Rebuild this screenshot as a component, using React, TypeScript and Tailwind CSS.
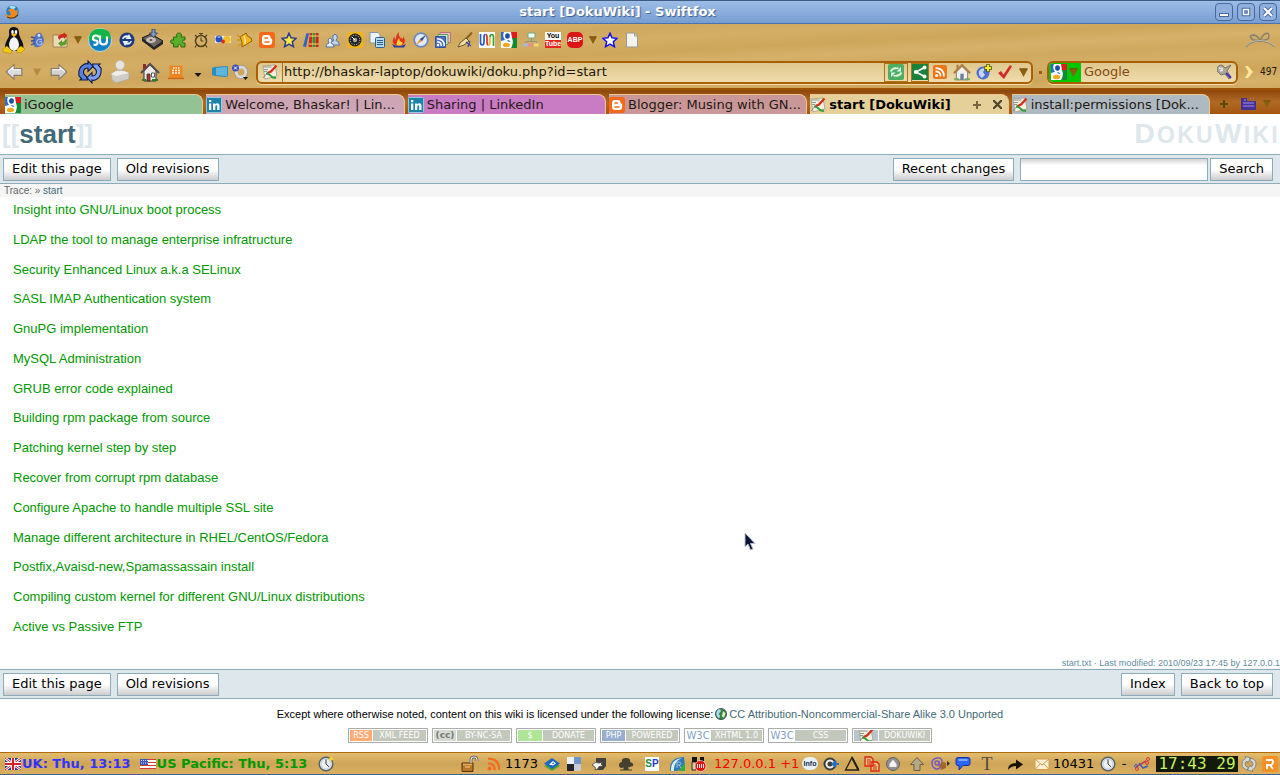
import type { ReactNode } from "react";

const topics = [
  "Insight into GNU/Linux boot process",
  "LDAP the tool to manage enterprise infratructure",
  "Security Enhanced Linux a.k.a SELinux",
  "SASL IMAP Authentication system",
  "GnuPG implementation",
  "MySQL Administration",
  "GRUB error code explained",
  "Building rpm package from source",
  "Patching kernel step by step",
  "Recover from corrupt rpm database",
  "Configure Apache to handle multiple SSL site",
  "Manage different architecture in RHEL/CentOS/Fedora",
  "Postfix,Avaisd-new,Spamassassain install",
  "Compiling custom kernel for different GNU/Linux distributions",
  "Active vs Passive FTP",
];

function Svg({
  className = "size-4",
  box = "0 0 16 16",
  children,
}: {
  className?: string;
  box?: string;
  children: ReactNode;
}) {
  return (
    <svg
      viewBox={box}
      className={`${className} shrink-0`}
      fill="none"
      aria-hidden="true"
    >
      {children}
    </svg>
  );
}

function Tool({
  label,
  width = "w-[22px]",
  children,
}: {
  label: string;
  width?: string;
  children: ReactNode;
}) {
  return (
    <button
      type="button"
      aria-label={label}
      className={`flex h-full shrink-0 items-center justify-center ${width}`}
    >
      {children}
    </button>
  );
}

/* ---------- shared glyphs ---------- */

function DownTriangle({ className = "size-2" }: { className?: string }) {
  return (
    <Svg className={className} box="0 0 8 8">
      <path d="M0 .5h8L4 8z" fill="#8a6010" />
      <path d="M.5.8h7" stroke="#5f3d05" strokeWidth=".6" />
    </Svg>
  );
}

function GoogleIcon() {
  return (
    <Svg>
      <path d="M0 0h16v16H0z" fill="#fff" />
      <path d="M10 0h6v6h-5z" fill="#e01b1b" />
      <path d="M11 6h5v10h-6q3-5 1-10z" fill="#118a35" />
      <path d="M0 0h3Q1 4 4 8l-4 1z" fill="#2a6ad0" />
      <ellipse cx="6.500" cy="4" rx="2.400" ry="2.700" fill="#1b50a8" />
      <path d="M6 8q3 0 3.500 2L7 9.500z" fill="#2a6ad0" />
      <ellipse cx="5.500" cy="13" rx="3.600" ry="2.200" fill="#f4a81c" />
    </Svg>
  );
}

function LinkedInIcon() {
  return (
    <Svg>
      <rect x=".5" y=".5" width="15" height="15" rx="1" fill="#1b84a8" stroke="#8fc9dc" />
      <path d="M3 6.500h2.300V13H3zM3 3h2.300v2.200H3zM7 6.500h2.200v1Q10 6.300 11.300 6.300q2.200 0 2.200 2.700v4h-2.300V9.500q0-1.300-.9-1.300T9.300 9.500V13H7z" fill="#fff" />
    </Svg>
  );
}

function BloggerIcon() {
  return (
    <Svg>
      <rect width="16" height="16" rx="2.500" fill="#f4691a" />
      <path d="M5.800 3h3q2.700 0 2.700 2.500 0 1 1 1.200.7.100.7 1v2q0 3.300-3.200 3.300H6Q3 13 3 10V6q0-3 2.800-3z" fill="#fff" />
      <path d="M6 6h2.500M6 10h4" stroke="#f4691a" strokeWidth="1.500" strokeLinecap="round" />
    </Svg>
  );
}

function DokuIcon() {
  return (
    <Svg>
      <path d="M1 2l12-1 2 11-12 3z" fill="#f3efe2" stroke="#9c9480" strokeWidth=".7" />
      <path d="M1.500 3h8M2 5.500h4M2 7.500h3" stroke="#8a9a8a" strokeWidth="1" />
      <path d="M14.500 1.500L9 7.500 5.500 9" stroke="#d3321d" strokeWidth="2.400" />
      <path d="M4 9.500q3 0 5 2.500t5 1.500" stroke="#2e9b34" strokeWidth="2" />
      <path d="M1 14l5-6" stroke="#7c7c70" strokeWidth=".8" />
    </Svg>
  );
}

function StarIcon({ fill, stroke }: { fill: string; stroke: string }) {
  return (
    <Svg>
      <path d="M8 1.200l2 4.600 5 .5-3.700 3.400 1.100 5L8 12.200l-4.400 2.500 1.100-5L1 6.300l5-.5z" fill={fill} stroke={stroke} strokeWidth="1.500" />
    </Svg>
  );
}

function RssArcs({ color, className }: { color: string; className?: string }) {
  return (
    <Svg className={className}>
      <circle cx="3.500" cy="12.500" r="2" fill={color} />
      <path d="M2 7.300q6.700 0 6.700 6.700M2 2.700q11.300 0 11.300 11.300" stroke={color} strokeWidth="2.300" />
    </Svg>
  );
}

function ClockIcon({ spark = false }: { spark?: boolean }) {
  return (
    <Svg>
      <circle cx="8" cy="8" r="6.800" fill="#eef2f4" stroke="#555f66" strokeWidth="1.400" />
      <circle cx="8" cy="8" r="5" stroke="#b6c0c8" strokeWidth=".8" />
      <path d="M8 8V3.500M8 8l3 2.800" stroke="#333" />
      {spark && <path d="M13 0l.8 2.200L16 3l-2.200.8L13 6l-.8-2.200L10 3l2.200-.8z" fill="#ffe11c" />}
    </Svg>
  );
}

function HouseIcon({ roof }: { roof: string }) {
  return (
    <Svg className="size-[18px]">
      <path d="M3 8l5-5 5 5v7H3z" fill="#f4f1e8" stroke="#777" strokeWidth=".8" />
      <path d="M.8 9L8 1.800 15.200 9" stroke={roof} strokeWidth="1.900" />
      <path d="M3 1.500h2v3l-2 2z" fill={roof} />
      <path d="M6.500 9.500h3V15h-3z" fill="#6d7f9d" />
      <path d="M1 14.500h4.500M10.500 14.500H15" stroke="#6fae5e" strokeWidth="1.800" />
    </Svg>
  );
}

/* ---------- title bar ---------- */

function TitleBar() {
  const control =
    "flex size-[18px] items-center justify-center rounded-[4px] border border-[#46689c] bg-[#8fb0de]";
  return (
    <header className="flex h-6 items-center border-t border-b border-t-[#3c5c84] border-b-[#4c73ab] bg-linear-to-b from-[#9dbde8] to-[#779dd0]">
      <span className="flex pl-1">
        <Svg>
          <circle cx="8.500" cy="7.500" r="6.300" fill="#2a80b8" />
          <path d="M5 3Q8 0 12 3L9 6z" fill="#a8dcf2" />
          <path d="M4 6q5-3 8 1l2-2-1 6q-3 4-8 3-4-1-4-4 3 2 6 1-1-4-3-5z" fill="#ef8a1f" />
          <path d="M3 13q6 3 11-2" stroke="#6d3c0c" strokeWidth="1.200" />
        </Svg>
      </span>
      <h1 className="flex-1 text-center text-[13px] leading-5 font-bold text-white [text-shadow:1px_1px_1px_#3f5f94]">
        start [DokuWiki] - Swiftfox
      </h1>
      <div className="flex gap-1 pr-[3px]">
        <button type="button" aria-label="Minimize" className={control}>
          <Svg className="size-3" box="0 0 12 12">
            <rect x="1.500" y="7.500" width="9" height="3" fill="#fff" stroke="#46689c" />
          </Svg>
        </button>
        <button type="button" aria-label="Maximize" className={control}>
          <Svg className="size-3" box="0 0 12 12">
            <rect x="3.500" y="3.500" width="5" height="5" stroke="#46689c" strokeWidth="3.500" />
            <rect x="3.500" y="3.500" width="5" height="5" stroke="#fff" strokeWidth="1.500" />
          </Svg>
        </button>
        <button type="button" aria-label="Close" className={control}>
          <Svg className="size-3" box="0 0 12 12">
            <path d="M2 2l8 8M10 2l-8 8" stroke="#46689c" strokeWidth="4" />
            <path d="M2 2l8 8M10 2l-8 8" stroke="#fff" strokeWidth="2.200" />
          </Svg>
        </button>
      </div>
    </header>
  );
}

/* ---------- bookmark toolbar ---------- */

function AddonBar() {
  return (
    <div className="flex h-8 items-center">
      <Tool label="Linux" width="w-[27px]">
        <Svg className="h-7 w-6" box="0 0 24 28">
          <path d="M12 1q5 0 5 6 0 3 3 8 3 7 0 10H5q-4-4 0-11 3-4 2-8 0-5 5-5z" fill="#111" />
          <path d="M12 11q4 1 5 7 0 6-5 7-5-1-5-7 1-6 5-7z" fill="#f4f4f4" />
          <ellipse cx="10.500" cy="6" rx="1.300" ry="2" fill="#fff" />
          <ellipse cx="14" cy="6" rx="1.300" ry="2" fill="#fff" />
          <path d="M9 8.500q3-2 6 0l-3 2.500z" fill="#f5c21c" />
          <path d="M1 23l4-3 5 5-1 2.500-8-1.500zM23 23l-4-3-4 3v4q5 1 8-4z" fill="#f3c913" stroke="#a57a00" strokeWidth=".5" />
        </Svg>
      </Tool>
      <Tool label="Pidgin">
        <Svg>
          <path d="M5 4q2-4 6-3l2 4q2 3 0 7-3 4-8 3-3-3-2-7z" fill="#5674bd" />
          <path d="M5 6l-4-1M5 8.500l-4 .5M5 11l-4 2" stroke="#3a5294" strokeWidth="1.300" />
          <path d="M12 8q-4-2-5 1t2 4q3 0 3-2t-3-1" stroke="#a9c0f0" strokeWidth="1.200" />
          <circle cx="9" cy="3.500" r="1.400" fill="#dbe6ff" />
        </Svg>
      </Tool>
      <Tool label="Sync folders">
        <Svg>
          <path d="M1 3h6l1 2h7v10H1z" fill="#eadbb8" stroke="#a08253" />
          <path d="M6 6q0-4 5-4l1-1.500 3.500 3L12 7V5.500Q8 5 8 8z" fill="#cf2a1f" />
          <path d="M15 8q0 6-5 5.500V15l-4-3.500L10 8v2q3 0 3-3z" fill="#5b9c2d" />
        </Svg>
      </Tool>
      <Tool label="Sync options" width="w-[13px]">
        <DownTriangle />
      </Tool>
      <Tool label="StumbleUpon" width="w-8">
        <Svg className="size-6" box="0 0 24 24">
          <circle cx="12" cy="12" r="11.500" fill="#1180c4" stroke="#dcebe0" strokeWidth=".8" />
          <path d="M.8 13Q1 1 12 .8T23.200 11Q12 10 .8 13z" fill="#12b54a" />
          <path d="M11 9.500Q10.500 7.500 8 7.500q-3 0-3 2.500t2.500 2.500 2 2.500-4 1.500M12 7.500V13q0 3.500 3.500 3.500T19 13V8.500" stroke="#fff" strokeWidth="2.200" />
        </Svg>
      </Tool>
      <Tool label="Refresh feeds">
        <Svg>
          <circle cx="8" cy="8" r="7.600" fill="#1d3c80" />
          <path d="M3 7q1.500-4.500 6-3.500l1-1.500 2.500 5H6.500L8 5.500Q5 5 4.500 7zM13 9q-1.500 4.500-6 3.500L6 14 3.500 9h6L8 10.500q3 .5 3.500-1.500z" fill="#e8f0ff" />
        </Svg>
      </Tool>
      <Tool label="Downloads" width="w-7">
        <Svg className="size-[22px]" box="0 0 22 22">
          <path d="M1 9l9-4 12 7-9 7z" fill="#6b6662" stroke="#151515" />
          <path d="M1 9l12 9 9-6v3l-9 6L1 12z" fill="#292725" />
          <ellipse cx="10" cy="11" rx="5" ry="3" fill="#c9bfb4" />
          <ellipse cx="10" cy="11" rx="1.500" ry=".9" fill="#555" />
          <path d="M11 0h3v4h2.500L12.500 8.500 8.500 4H11z" fill="#8197bf" stroke="#273a66" strokeWidth=".8" />
        </Svg>
      </Tool>
      <Tool label="Add-ons" width="w-6">
        <Svg>
          <path d="M7 5Q5.500 1 9 1t2 4h4v3q-2.500-.5-2.500 1.500T15 11v4h-4q.5-2.500-1.500-2.500T8 15H3.500v-3.500Q.5 12 .5 9.500T3.500 8V5z" fill="#58ae2b" stroke="#2e6b12" />
        </Svg>
      </Tool>
      <Tool label="Timer">
        <Svg>
          <circle cx="8" cy="9" r="5.500" stroke="#55451f" strokeWidth="1.600" />
          <path d="M8 9V5.500M8 9h2.500M6 1.500h4M8 1v3M2 3l2 2M14 3l-2 2M3.500 13L2 15.500M12.500 13l1.500 2.500" stroke="#55451f" strokeWidth="1.200" />
        </Svg>
      </Tool>
      <Tool label="Bookmark sync">
        <Svg>
          <path d="M0 4h16v7H0z" fill="#eceae6" />
          <circle cx="4" cy="7" r="3.500" fill="#2450c0" />
          <circle cx="12" cy="7.500" r="3.800" fill="#f2bf2b" />
          <circle cx="8" cy="9.500" r="2" fill="#d92c22" />
          <path d="M2.500 5h3" stroke="#a9c3ff" strokeWidth="1.300" />
        </Svg>
      </Tool>
      <Tool label="Alerts">
        <Svg>
          <path d="M3 5l6-4q1 4 5 5l1 3-10 6q1-5-2-10z" fill="#f5b51a" stroke="#955f05" />
          <path d="M0 3l3 2M0 8h3M1 14l3-2" stroke="#d98d0a" strokeWidth="1.400" />
          <path d="M7 4q2 4 1 8" stroke="#fff0a8" strokeWidth="1.400" />
        </Svg>
      </Tool>
      <Tool label="Blogger"><BloggerIcon /></Tool>
      <Tool label="Favourites"><StarIcon fill="#fbe83c" stroke="#2b3c93" /></Tool>
      <Tool label="Library">
        <Svg>
          <path d="M0 14.500L3.500 1l2.500.5L3 15z" fill="#2c66c4" />
          <path d="M6.500 1H9v14H5.500z" fill="#d32a20" />
          <path d="M9.500 1H12v14H9.500z" fill="#2a9b31" />
          <path d="M12.500 1h3v14h-3z" fill="#c7251b" />
          <path d="M6 4h9.500M6 12h9.500" stroke="#f7df6b" />
        </Svg>
      </Tool>
      <Tool label="Contacts">
        <Svg>
          <path d="M5 13q0-4 4-4.500-2-2-1-5 2-2.500 4 0 1 3-1 5 3 .5 3.500 4.500z" fill="#c5d4ec" stroke="#5874a6" />
          <path d="M1 15q0-3.500 3-4Q2.500 9 3.500 7q1.500-2 3 0t-.5 4q3 .5 3 4z" fill="#e6eefa" stroke="#5874a6" />
        </Svg>
      </Tool>
      <Tool label="Speed">
        <Svg>
          <rect width="16" height="16" rx="2" fill="#efb31d" />
          <circle cx="8" cy="8" r="6.500" fill="#222" />
          <circle cx="8" cy="8" r="4.800" stroke="#e9e9d9" strokeDasharray="1 1.500" />
          <circle cx="8" cy="8" r="2.200" fill="#a8a89a" />
          <path d="M5 5l3 3" stroke="#fff" />
        </Svg>
      </Tool>
      <Tool label="Copy page">
        <Svg>
          <path d="M1 .5h8l2 2V11H1z" fill="#edf4fa" stroke="#8097ab" />
          <rect x="6.500" y="5.500" width="9" height="10" rx="1" fill="#b7d9ef" stroke="#24618f" />
          <path d="M8 8.500h6M8 10.500h6M8 12.500h6" stroke="#24618f" />
        </Svg>
      </Tool>
      <Tool label="Burn">
        <Svg>
          <path d="M8 0q-1 4 2 6t2-2q4 6 0 9-4 2-8 0-4-3-1-8l2 3Q4 4 8 0z" fill="#e2341d" />
          <path d="M8 6q0 3 2.500 4t-.5 3.500H6Q4.500 11 8 6z" fill="#ffd23c" />
          <path d="M1 12q7 4 14 0l-2 3.500H3z" fill="#2d3f9e" />
        </Svg>
      </Tool>
      <Tool label="Compass">
        <Svg>
          <circle cx="8" cy="8" r="6.800" fill="#dfebfa" stroke="#7089bd" strokeWidth="1.800" />
          <path d="M13 3L9 9 3 13l4-6z" fill="#e9963b" />
          <path d="M13 3L9 9 7 7z" fill="#2a4b9c" />
        </Svg>
      </Tool>
      <Tool label="Feed reader">
        <Svg>
          <path d="M5 .5h10.500v10H5z" fill="#f3c4c4" stroke="#c0707a" />
          <path d="M3 2.500h10v10H3z" fill="#cce6c9" stroke="#5b985c" />
          <path d="M.5 4.500h10v11H.5z" fill="#4a71c3" stroke="#31549d" />
          <circle cx="3" cy="13" r="1.200" fill="#fff" />
          <path d="M2 9.700q4.300 0 4.300 4.300M2 6.700q7.300 0 7.300 7.300" stroke="#fff" strokeWidth="1.400" />
        </Svg>
      </Tool>
      <Tool label="Clean">
        <Svg>
          <path d="M15 .5L8 8" stroke="#8c5d1e" strokeWidth="2" />
          <path d="M9 6l3 3-5 4-6 2 2-4z" fill="#efdfa7" stroke="#6c5527" />
          <path d="M9 10l5 4M13 9l-2 6" stroke="#3a4b9b" strokeWidth="1.300" />
        </Svg>
      </Tool>
      <Tool label="Waves">
        <Svg>
          <path d="M0 0h16v16H0z" fill="#fff" />
          <path d="M1.500 2v8q0 3 1.700 3T5 10V5q0-2.500 1.500-2.500" stroke="#2456d4" strokeWidth="1.700" />
          <path d="M6.500 2.500Q8 2.500 8 5v5q0 3 1.500 3" stroke="#d93124" strokeWidth="1.700" />
          <path d="M9.500 13q1.500 0 1.500-3V5" stroke="#f1b81c" strokeWidth="1.700" />
          <path d="M11 5q0-2.500 1.700-2.500T14.500 5v9" stroke="#33a336" strokeWidth="1.700" />
        </Svg>
      </Tool>
      <Tool label="Google"><GoogleIcon /></Tool>
      <Tool label="Sitemap">
        <Svg>
          <path d="M5 1h7v5H5z" fill="#f3fff5" stroke="#6fa784" />
          <path d="M8.500 6v4M3 11V9.500h10.500V11" stroke="#879487" />
          <path d="M.5 11.500h4v3h-4z" fill="#a2b9ed" />
          <path d="M5.500 11.500h4.500v3H5.500z" fill="#eb8d8d" />
          <path d="M11 11.500h4.500v3H11z" fill="#f2dc69" />
        </Svg>
      </Tool>
      <Tool label="YouTube">
        <span className="flex size-4 flex-col bg-white text-center font-[Liberation_Sans_Narrow,Liberation_Sans,sans-serif] text-[7px] leading-[8px] font-bold">
          <span className="text-black">You</span>
          <span className="bg-[#e02a20] text-white">Tube</span>
        </span>
      </Tool>
      <Tool label="Adblock Plus">
        <span className="flex size-4 items-center justify-center rounded-[5px] bg-[#dc1616] font-[Liberation_Sans,sans-serif] text-[7px] leading-4 font-bold text-white">
          ABP
        </span>
      </Tool>
      <Tool label="Adblock options" width="w-[13px]"><DownTriangle /></Tool>
      <Tool label="Bookmark star"><StarIcon fill="#fff" stroke="#1414f0" /></Tool>
      <Tool label="New page">
        <Svg>
          <path d="M2.500 1h8l3 3v11h-11z" fill="#f3f3ef" stroke="#9b9a94" />
          <path d="M10.500 1v3h3" stroke="#9b9a94" />
        </Svg>
      </Tool>
      <span className="ml-auto pr-1">
        <Svg className="h-4 w-[31px]" box="0 0 31 16">
          <path d="M1 15q4-6 14-6 9 0 15 6M15 8.500Q8 9 6 6t3-3q4 1 6 5.500 3-6 6-7t3 3-9 4" stroke="#85806f" strokeWidth="1.500" />
          <path d="M1 14.500q4-6 14-6 9 0 15 6" stroke="#d8d3c6" strokeWidth=".7" />
        </Svg>
      </span>
    </div>
  );
}

/* ---------- navigation toolbar ---------- */

function NavBar() {
  const field =
    "flex h-[23px] items-center overflow-hidden rounded-[6px] border-2 border-[#a85f08] bg-linear-to-b from-[#e0c88c] to-[#efdcae] shadow-[0_1px_0_#f4dca4]";
  return (
    <div className="flex h-[34px] items-center border-b-2 border-[#9d5209]">
      <Tool label="Back" width="w-7">
        <Svg className="size-[18px]">
          <path d="M1 8l7-6.500V5h7v6H8v3.500z" fill="#dcdcdc" stroke="#85796a" />
          <path d="M3 7.500L7 4v2h7" stroke="#fff" />
        </Svg>
      </Tool>
      <Tool label="History" width="w-[18px]">
        <Svg className="size-2" box="0 0 8 8">
          <path d="M0 .5h8L4 8z" fill="#b58a3c" />
        </Svg>
      </Tool>
      <Tool label="Forward" width="w-[26px]">
        <Svg className="size-[18px]">
          <path d="M15 8L8 1.500V5H1v6h7v3.500z" fill="#d2d2d2" stroke="#85796a" />
          <path d="M13 7.500L9 4v2H2" stroke="#fff" />
        </Svg>
      </Tool>
      <Tool label="Reload" width="w-9">
        <Svg className="size-6" box="0 0 24 24">
          <path d="M1 16Q0 8 5 5q3-2 5-1V1l5 5.500-5 5V8Q6 8 5.500 12q0 3 3 4.500l1 3.500H2l1.500-1.500z" fill="#5b80dc" stroke="#0d1d49" strokeWidth="1.100" />
          <path d="M23 8q1 8-4 11-3 2-5 1v3l-5-5.500 5-5V16q4 0 4.500-4 0-3-3-4.500l-1-3.500H22l-1.500 1.500z" fill="#7f9ff0" stroke="#0d1d49" strokeWidth="1.100" />
        </Svg>
      </Tool>
      <Tool label="Stop" width="w-6">
        <Svg className="h-6 w-5" box="0 0 20 24">
          <path d="M7 8h5l1 5H7z" fill="#c9c6c1" />
          <circle cx="10" cy="5" r="4.500" fill="#e7e5e2" stroke="#bdb9b3" strokeWidth=".6" />
          <path d="M1 14l5-3h8l5 2v6L6 23l-4-3z" fill="#cfccc7" stroke="#aaa6a0" strokeWidth=".7" />
          <path d="M1 14l5 2 13-3-5-2H6z" fill="#efeeeb" />
        </Svg>
      </Tool>
      <Tool label="Home" width="w-9">
        <Svg className="size-5" box="0 0 20 20">
          <path d="M4 9l6-6 6 6v10H4z" fill="#ece9e6" stroke="#333" />
          <path d="M1 11l9-9 9 9" stroke="#565050" strokeWidth="2.200" />
          <path d="M3 2h3v5H3z" fill="#8b2f26" />
          <path d="M7 12h3v7H7z" fill="#b52c21" stroke="#333" strokeWidth=".8" />
          <path d="M11.500 11h3v4h-3z" fill="#fff" stroke="#333" strokeWidth=".8" />
          <path d="M2 18h4M12 18h6" stroke="#2f7d24" strokeWidth="2" />
        </Svg>
      </Tool>
      <Tool label="Sun tab" width="w-4">
        <Svg>
          <path d="M1.500 1.500h13V11l1 3.500H.5l1-3.500z" fill="#ef8624" />
          <path d="M5 4h1.500M7.500 4H9M10 4h1.500M4 6.500h2M7 6.500h2M10 6.500h2M4 9h2M7 9h2M10 9h2" stroke="#fff3df" strokeWidth="1.700" />
          <path d="M0 14.500h16" stroke="#c76412" strokeWidth="1.200" />
        </Svg>
      </Tool>
      <Tool label="More" width="w-7">
        <Svg className="mt-1.5 h-2 w-2" box="0 0 8 8">
          <path d="M.5 2h7L4 6z" fill="#161616" />
        </Svg>
      </Tool>
      <Tool label="Tags" width="w-4">
        <Svg>
          <path d="M0 4l2-1 13-1 1 1v9l-2 1-11-1-3-1z" fill="#2f8cbd" />
          <path d="M4 4l11-1v9L4 11z" fill="#5fb6dd" />
        </Svg>
      </Tool>
      <Tool label="Proxy" width="w-6">
        <Svg>
          <circle cx="9" cy="8" r="5" stroke="#d9d9dd" strokeWidth="3" />
          <circle cx="9" cy="8" r="6.700" stroke="#8e8e94" strokeWidth=".6" />
          <circle cx="3.500" cy="4" r="3.500" fill="#3a4ebd" />
          <path d="M2 2.500l3 3M5 2.500l-3 3" stroke="#fff" />
          <path d="M11 13h5l-2.500 3z" fill="#111" />
        </Svg>
      </Tool>

      <div className={`${field} ml-1 min-w-0 flex-1`}>
        <span className="flex h-full items-center border-r border-[#a0742c] pr-1 pl-1">
          <DokuIcon />
        </span>
        <input
          aria-label="Location"
          defaultValue="http://bhaskar-laptop/dokuwiki/doku.php?id=start"
          className="min-w-0 flex-1 bg-transparent pl-px text-[13px] leading-5 text-[#1d1708] outline-none"
        />
        <span className="flex h-full items-center gap-[3px]">
          <button type="button" aria-label="Convert link" className="flex h-full w-6 items-center border border-[#ad7318] pl-[3px]">
            <Svg>
              <rect width="16" height="16" rx="2" fill="#4fae62" />
              <path d="M2.500 7.500Q5 3 10.500 4.500M13.500 8.500Q11 13 5.500 11.500" stroke="#e5f8e6" strokeWidth="1.700" />
              <path d="M13 3v4.500H8.500zM3 13V8.500h4.500z" fill="#e5f8e6" />
            </Svg>
          </button>
          <button type="button" aria-label="Share" className="flex h-full w-[18px] items-center justify-center border border-[#ad7318]">
            <Svg>
              <path d="M0 0h16v16H0z" fill="#19813a" />
              <path d="M12.500 3.500L4 8l8.500 4.500" stroke="#fff" strokeWidth="1.700" />
              <circle cx="12.500" cy="3.500" r="2" fill="#fff" />
              <circle cx="3.800" cy="8" r="2" fill="#fff" />
              <circle cx="12.500" cy="12.500" r="2" fill="#fff" />
            </Svg>
          </button>
        </span>
        <Tool label="Subscribe">
          <span className="flex size-[14px] items-center justify-center rounded-[2px] bg-[#ee7518]">
            <RssArcs color="#fff" className="size-3" />
          </span>
        </Tool>
        <Tool label="Site home"><HouseIcon roof="#ad7f4c" /></Tool>
        <Tool label="Add network">
          <Svg>
            <circle cx="7" cy="9" r="6.500" fill="#4d6fd0" />
            <path d="M3 7q3-4 6-2L7 8l2 3-3 3Q2 12 3 7z" fill="#c3d5f8" />
            <path d="M12 0v8M8 4h8" stroke="#4c5207" strokeWidth="3.500" />
            <path d="M12 .8v6.400M8.800 4h6.400" stroke="#f4ee2c" strokeWidth="2" />
          </Svg>
        </Tool>
        <Tool label="Check site" width="w-5">
          <Svg>
            <path d="M1 9l3-2 2.500 3.500L13 1l2 1.500L7 15z" fill="#d22b2b" />
          </Svg>
        </Tool>
        <Tool label="Location history" width="w-4"><DownTriangle className="size-[9px]" /></Tool>
      </div>

      <span className="flex w-3.5 justify-center">
        <span className="size-[3px] bg-[#9c5f10]" />
      </span>

      <div className={`${field} w-[191px]`}>
        <button type="button" aria-label="Search engine" className="flex h-full w-8 items-center gap-0.5 bg-[#00c800] pl-0.5">
          <GoogleIcon />
          <DownTriangle className="size-[9px]" />
        </button>
        <input
          aria-label="Search the web"
          placeholder="Google"
          className="min-w-0 flex-1 bg-transparent pl-[3px] text-[13px] leading-5 outline-none placeholder:text-[#8a4a12]"
        />
        <Tool label="Search">
          <Svg>
            <path d="M0 4q1-3 5-3l3 3 6-3-4 6 4 6-2 2-4-5-4 1-4-4z" fill="#aaa69c" stroke="#6a665e" strokeWidth=".8" />
            <path d="M2 4l4 1M3 7l3-1" stroke="#eeeae0" strokeWidth="1.500" />
            <path d="M9 9l5 5" stroke="#4d2fb4" strokeWidth="2" />
          </Svg>
        </Tool>
      </div>
      <Tool label="Overflow" width="w-[22px]">
        <Svg className="h-3 w-2" box="0 0 8 12">
          <path d="M0 0h3l5 6-5 6H0l3.500-6z" fill="#ffe49b" />
        </Svg>
      </Tool>
      <span className="w-5 font-[DejaVu_Sans_Condensed,DejaVu_Sans,sans-serif] text-[10px] leading-3 text-[#1d1708]">
        497
      </span>
    </div>
  );
}

/* ---------- tabs ---------- */

const tabs = [
  { title: "iGoogle", tint: "bg-[#93c294]", icon: <GoogleIcon /> },
  { title: "Welcome, Bhaskar! | Lin...", tint: "bg-[#cda5b4]", icon: <LinkedInIcon /> },
  { title: "Sharing | LinkedIn", tint: "bg-[#c97bc4]", icon: <LinkedInIcon /> },
  { title: "Blogger: Musing with GN...", tint: "bg-[#c99798]", icon: <BloggerIcon /> },
  { title: "start [DokuWiki]", tint: "bg-[#e6d09a]", icon: <DokuIcon />, active: true },
  { title: "install:permissions [Dok...", tint: "bg-[#afb9c1]", icon: <DokuIcon /> },
];

function TabStrip() {
  return (
    <nav
      aria-label="Tabs"
      className="flex h-6 items-end bg-linear-to-b from-[#8f4609] via-[#b06a24] to-[#a4560f] pl-[5px]"
    >
      <div className="flex min-w-0 flex-1">
        {tabs.map((tab) => (
          <div
            key={tab.title}
            className={`mr-[3px] flex h-5 min-w-0 flex-1 items-center rounded-tr-[8px] border-t border-r border-[#e9c98f] ${tab.tint}`}
          >
            <button type="button" className="flex min-w-0 flex-1 items-center gap-[3px] text-left whitespace-nowrap">
              {tab.icon}
              <span
                className={`text-[13px] leading-5 ${
                  tab.active ? "font-bold text-black" : "text-[#1f1a14]"
                }`}
              >
                {tab.title}
              </span>
            </button>
            {tab.active && (
              <span className="flex items-center gap-3 pr-1.5">
                <button type="button" aria-label="Duplicate tab">
                  <Svg className="size-2" box="0 0 8 8">
                    <path d="M4 0v8M0 4h8" stroke="#77653f" strokeWidth="2" />
                  </Svg>
                </button>
                <button type="button" aria-label="Close tab">
                  <Svg className="size-[9px]" box="0 0 8 8">
                    <path d="M0 0l8 8M8 0L0 8" stroke="#4f432c" strokeWidth="2" />
                  </Svg>
                </button>
              </span>
            )}
          </div>
        ))}
      </div>
      <div className="flex h-5 w-[67px] items-center">
        <Tool label="New tab" width="w-[22px]">
          <Svg className="size-2" box="0 0 8 8">
            <path d="M4 0v8M0 4h8" stroke="#5a4a05" strokeWidth="2" />
          </Svg>
        </Tool>
        <Tool label="Tab groups" width="w-7">
          <Svg>
            <path d="M0 2h6v3h9v9H0z" fill="#473094" />
            <path d="M2 7h11M2 10h11M3 4h2M9 2h1M12 2h1" stroke="#a490ea" strokeWidth="1.200" />
          </Svg>
        </Tool>
        <DownTriangle />
      </div>
    </nav>
  );
}

/* ---------- wiki page ---------- */

function WikiButton({ children }: { children: ReactNode }) {
  return (
    <button
      type="button"
      className="h-[23px] border border-[#8cacbb] bg-linear-to-b from-white from-50% to-[#cccccc] px-2 text-[13px] leading-5 text-black"
    >
      {children}
    </button>
  );
}

function ButtonBar({ children }: { children: ReactNode }) {
  return (
    <div className="flex h-[30px] items-center justify-between border-y border-[#8cacbb] bg-[#dee7ec] pr-[7px] pl-[3px]">
      <div className="flex gap-1.5">
        <WikiButton>Edit this page</WikiButton>
        <WikiButton>Old revisions</WikiButton>
      </div>
      <div className="flex gap-1.5">{children}</div>
    </div>
  );
}

const badges = [
  { left: "RSS", right: "XML FEED", tint: "w-[22px] bg-[#ffab76] text-white" },
  { left: "(cc)", right: "BY-NC-SA", tint: "w-[22px] bg-[#d6dbd2] text-[9px] font-bold text-[#777777]" },
  { left: "$", right: "DONATE", tint: "w-6 bg-[#aee596] text-white" },
  { left: "PHP", right: "POWERED", tint: "w-[23px] bg-[#98afcf] text-white" },
  { left: "W3C", right: "XHTML 1.0", tint: "w-6 bg-white text-[10px] text-[#7f9fc4]" },
  { left: "W3C", right: "CSS", tint: "w-6 bg-white text-[10px] text-[#7f9fc4]" },
  { left: "", right: "DOKUWIKI", tint: "w-6 bg-[#b9c7cc]" },
];

function WikiPage() {
  return (
    <main className="flex flex-1 flex-col bg-white font-[Liberation_Sans,sans-serif]">
      <div className="flex h-10 items-center justify-between overflow-hidden pl-0.5 font-bold">
        <h2 className="text-[26px] leading-10 text-[#dee7ec]">
          [[<a href="#start" className="text-[#436976]">start</a>]]
        </h2>
        <a href="#wiki" className="text-[23px] leading-10 tracking-widest text-[#dee7ec] uppercase">
          <span className="text-[28px]">D</span>oku<span className="text-[28px]">W</span>iki
        </a>
      </div>
      <div className="font-[DejaVu_Sans,sans-serif]">
        <ButtonBar>
          <WikiButton>Recent changes</WikiButton>
          <form className="flex gap-0.5" onSubmit={(e) => e.preventDefault()}>
            <input
              aria-label="Search the wiki"
              className="h-[23px] w-[188px] border border-[#8cacbb] bg-linear-to-b from-[#d4d4d4] to-white to-30% px-1 text-[13px] outline-none"
            />
            <WikiButton>Search</WikiButton>
          </form>
        </ButtonBar>
      </div>
      <p className="bg-[#f5f5f5] pl-1 text-[10px] leading-[13px] text-[#666666]">
        Trace: » <a href="#start" className="text-[#436976]">start</a>
      </p>

      <ul className="flex flex-1 flex-col justify-between px-[13px] pt-[3px] pb-5 text-[13px] leading-5 text-[#009900]">
        {topics.map((topic) => (
          <li key={topic}>
            <a href="#topic">{topic}</a>
          </li>
        ))}
      </ul>
      <p className="text-right text-[9px] leading-3 text-[#638c9c]">
        start.txt · Last modified: 2010/09/23 17:45 by 127.0.0.1
      </p>
      <div className="font-[DejaVu_Sans,sans-serif]">
        <ButtonBar>
          <WikiButton>Index</WikiButton>
          <WikiButton>Back to top</WikiButton>
        </ButtonBar>
      </div>

      <footer className="flex flex-col items-center pt-[7px] pb-[9px]">
        <p className="flex items-center text-[11px] leading-4 text-black">
          Except where otherwise noted, content on this wiki is licensed under the following license:
          <span className="mr-0.5 ml-0.5">
            <Svg className="size-3">
              <circle cx="8" cy="8" r="7.500" fill="#3f7f3a" stroke="#2c4a5c" />
              <path d="M4 2q4-1 4 2L5 8l2 3-2 3Q-1 9 4 2z" fill="#a9dbf3" />
              <path d="M11 4l3 3-2 6-3-2z" fill="#d6efd0" />
            </Svg>
          </span>
          <a href="#license" className="text-[#436976]">
            CC Attribution-Noncommercial-Share Alike 3.0 Unported
          </a>
        </p>
        <div className="mt-1.5 flex gap-1">
          {badges.map((badge) => (
            <a
              key={badge.left + badge.right}
              href="#badge"
              className="flex h-[15px] w-20 gap-px border border-[#acacac] bg-white p-px font-[DejaVu_Sans,sans-serif] text-[8px] leading-[11px]"
            >
              <span className={`flex items-center justify-center overflow-hidden ${badge.tint}`}>
                {badge.left || <DokuIcon />}
              </span>
              <span className="flex-1 bg-[#c3c8bc] text-center text-white">{badge.right}</span>
            </a>
          ))}
        </div>
      </footer>
    </main>
  );
}

/* ---------- status bar ---------- */

function StatusBar() {
  return (
    <div className="flex h-[23px] items-center border-t border-b border-t-[#b06c0c] border-b-[#41618c] bg-linear-to-b from-[#e3bd6e] via-[#cfa558] to-[#d9b062] text-[13px] leading-5">
      <span className="flex items-center gap-px pl-[5px] font-bold text-[#3333ff]">
        <Svg className="h-3 w-4" box="0 0 16 12">
          <path d="M0 0h16v12H0z" fill="#27408f" />
          <path d="M0 0l16 12M16 0L0 12" stroke="#fff" strokeWidth="2.600" />
          <path d="M0 0l16 12M16 0L0 12" stroke="#d0202c" />
          <path d="M8 0v12M0 6h16" stroke="#fff" strokeWidth="4" />
          <path d="M8 0v12M0 6h16" stroke="#d0202c" strokeWidth="2.200" />
        </Svg>
        UK: Thu, 13:13
      </span>
      <span className="flex items-center gap-px pl-[9px] font-bold text-[#009900]">
        <Svg className="h-3 w-4" box="0 0 16 12">
          <path d="M0 1h16v10H0z" fill="#fff" />
          <path d="M0 1.500h16M0 4.500h16M0 7.500h16M0 10.500h16" stroke="#d33b3b" />
          <path d="M0 1h8v6H0z" fill="#3a56b8" />
          <path d="M1 2.500h7M1 5h7" stroke="#fff" strokeWidth=".8" strokeDasharray="1 1" />
        </Svg>
        US Pacific: Thu, 5:13
      </span>
      <Tool label="World clock" width="w-[38px]"><ClockIcon spark /></Tool>

      <div className="ml-auto flex h-full items-center">
        <Tool label="Security" width="w-[26px]">
          <Svg className="size-[18px]" box="0 0 18 18">
            <path d="M1 8h11v8.500H1z" fill="#b8752c" stroke="#5b3208" />
            <path d="M2 9.500h9M4 12h5" stroke="#e7b065" strokeWidth="1.500" />
            <path d="M10 8V5q0-3 3-3t3 3v1" stroke="#555" strokeWidth="2.600" />
            <path d="M10 8V5q0-3 3-3t3 3v1" stroke="#e4e4e4" strokeWidth="1.200" />
          </Svg>
        </Tool>
        <Tool label="Unread feeds" width="w-[22px]">
          <RssArcs color="#f26c1b" />
        </Tool>
        <span className="w-[34px]">1173</span>
        <Tool label="Diigo" width="w-[26px]">
          <Svg>
            <path d="M0 10l8-5 8 5-8 5z" fill="#54a52f" />
            <path d="M0 7.500L8 2l8 5.500L8 13z" fill="#1b66c0" />
            <path d="M5 8.500l4-3.500 3 2.500L9 9.500z" fill="#fff" />
            <path d="M8 7.500l1.500-1 1 .8-1.500 1z" fill="#1b66c0" />
          </Svg>
        </Tool>
        <Tool label="Delicious" width="w-[18px]">
          <Svg className="size-[14px]">
            <path d="M0 0h8v8H0z" fill="#eef0f5" />
            <path d="M8 0h8v8H8z" fill="#6f93cc" />
            <path d="M0 8h8v8H0z" fill="#25262b" />
            <path d="M8 8h8v8H8z" fill="#c7cbd3" />
          </Svg>
        </Tool>
        <Tool label="Badger" width="w-8">
          <Svg>
            <path d="M5 2h10v8l-3 4H5z" fill="#44423d" />
            <path d="M1 9q3-4 7-2l4-1-2 2 2 2-4 .5Q7 14 4 14q1-2 0-3z" fill="#f5f5f2" stroke="#44423d" strokeWidth=".8" />
          </Svg>
        </Tool>
        <Tool label="Tree">
          <Svg>
            <path d="M4 6q-1-4 4-4t4 4q4 1 3 4l-5 1.500 1 2.500H5l1-2.500Q1 13 1 9.500T4 6z" fill="#45402f" />
            <path d="M2 14h12" stroke="#45402f" />
          </Svg>
        </Tool>
        <span className="flex w-[30px] justify-center">
          <span className="size-[14px] bg-white text-center font-[Liberation_Sans,sans-serif] text-[10px] leading-[14px] font-bold text-[#2439e0]">
            <span className="text-[#198c3f]">S</span>P
          </span>
        </span>
        <Tool label="RefControl" width="w-[19px]">
          <Svg>
            <path d="M1 15Q0 1 15 1l1 9q-3 6-15 5z" fill="#2e78b4" />
            <path d="M2 15Q1 4 13 2 4 6 5 15z" fill="#d9f0f9" />
            <path d="M11 12l5-5v8h-6z" fill="#3da743" />
            <path d="M8 12V6h2q2 0 2 1.500T10 9H8M10 9l2 3" stroke="#9ec6e0" />
          </Svg>
        </Tool>
        <Tool label="Script blocker" width="w-[26px]">
          <Svg>
            <path d="M1 1h5v4h3V1h4v5H1z" fill="#141414" />
            <path d="M1 6h4v8H1z" fill="#d8c69a" stroke="#141414" strokeWidth=".8" />
            <circle cx="9.500" cy="10" r="5.500" fill="#e01212" stroke="#fff" strokeWidth=".6" />
            <path d="M6.500 8v4M8.500 8v4M10.500 8v4M12.500 8v4" stroke="#fff" strokeWidth=".9" />
          </Svg>
        </Tool>
        <span className="w-[87px] pl-0.5 whitespace-nowrap text-[#ff0000]">
          127.0.0.1 +1
        </span>
        <span className="flex w-[22px] justify-center">
          <span className="flex h-[13px] w-4 items-center justify-center rounded-full bg-[#e9f2fb] font-[Liberation_Sans,sans-serif] text-[7px] leading-3 font-bold text-[#13293e]">
            Info
          </span>
        </span>
        <Tool label="Exit node" width="w-5">
          <Svg>
            <circle cx="7" cy="8" r="5.500" fill="#eee" stroke="#3c3c3c" strokeWidth="2" />
            <circle cx="7" cy="8" r="2.500" fill="#3c3c3c" />
            <path d="M16 8h-5M13 5l-3.500 3 3.500 3" stroke="#2871bf" strokeWidth="2" />
          </Svg>
        </Tool>
        <Tool label="Delta">
          <Svg>
            <path d="M8 1.500L14.500 14h-13z" stroke="#26221a" strokeWidth="1.300" />
            <path d="M8 1.500L14.500 14" stroke="#26221a" strokeWidth="2" />
          </Svg>
        </Tool>
        <Tool label="Copy files" width="w-[18px]">
          <Svg>
            <path d="M1 1h6l2 2v7H1zM7 6h6l2 2v7H7z" fill="#e8c47c" stroke="#dd2212" strokeWidth="1.300" />
            <path d="M3 4h4M3 6h3M3 8h3M9 9h3M9 11h4M9 13h4" stroke="#dd2212" />
          </Svg>
        </Tool>
        <Tool label="Scroll up" width="w-6">
          <Svg>
            <circle cx="8" cy="8" r="6.500" fill="#8f8f91" stroke="#646465" />
            <path d="M8 3.500L11.500 8v3h-7V8z" fill="#f2f2f2" />
          </Svg>
        </Tool>
        <Tool label="Parent page" width="w-6">
          <Svg>
            <path d="M8 1.500L14.500 8.500H11V14.500H5V8.500H1.500z" fill="#b3a988" stroke="#6b5f45" />
          </Svg>
        </Tool>
        <Tool label="Mail address" width="w-[22px]">
          <Svg className="h-4 w-[19px]" box="0 0 19 16">
            <path d="M10 11q-3 3-6 1.500T1 7t5-5 5 4-2 4-1-2V5" stroke="#7258c7" strokeWidth="1.400" />
            <circle cx="6" cy="7" r="2" stroke="#7258c7" strokeWidth="1.300" />
            <path d="M9 8l3-2 3 1v5l-5 2z" fill="#a2672a" />
            <path d="M16 5l3 2.500-3 2.500z" fill="#333" />
          </Svg>
        </Tool>
        <Tool label="Chat" width="w-6">
          <Svg>
            <path d="M3 1.500h10q2 0 2 2v4q0 2-2 2H8L4 14V9.500H3q-2 0-2-2v-4q0-2 2-2z" fill="#2d66f6" stroke="#1230ad" />
            <path d="M3.500 4h9" stroke="#b0cbff" strokeWidth="1.300" />
          </Svg>
        </Tool>
        <span className="w-6 text-center font-[Liberation_Serif,serif] text-[18px] leading-5 text-[#4e4a40]">T</span>
        <Tool label="Send" width="w-8">
          <Svg>
            <path d="M1 14q0-7 8-7V3.500l7 5-7 5V10q-5 0-8 4z" fill="#171208" />
          </Svg>
        </Tool>
        <Tool label="Inbox" width="w-[22px]">
          <Svg>
            <path d="M1 3h14v10.500H1z" fill="#fbf0d6" stroke="#d49b48" />
            <path d="M1 3l7 6 7-6M1 13.500L6 8M15 13.500L10 8" stroke="#d49b48" />
          </Svg>
        </Tool>
        <span className="w-[43px]">10431</span>
        <Tool label="Clock" width="w-6"><ClockIcon /></Tool>
        <span className="w-2 text-center">-</span>
        <Tool label="Snippets" width="w-7">
          <Svg>
            <path d="M2 11l10-6" stroke="#cf3b43" strokeWidth="1.500" />
            <path d="M5 7l4 5 5-2" stroke="#3f63bb" strokeWidth="1.500" />
            <circle cx="2" cy="10" r="1.500" stroke="#3f63bb" />
            <circle cx="3" cy="13" r="1.500" stroke="#cf3b43" />
            <circle cx="14" cy="3" r="1.500" stroke="#cf3b43" />
            <circle cx="13" cy="7" r="1.500" stroke="#cf3b43" />
          </Svg>
        </Tool>
        <time className="h-4 w-[82px] bg-[#131a0c] text-center font-[DejaVu_Sans_Mono,monospace] text-[16px] leading-4 whitespace-nowrap text-[#c3f25c]">
          17:43 29
        </time>
        <Tool label="Refresh all">
          <Svg>
            <path d="M7 14q-6-1-6-6 0-4 4-6L4 .5 10 2 6.500 7 6 5Q3.500 6 4 8.500T7 11zM9 2q6 1 6 6 0 4-4 6l1 1.500L6 14l3.500-5 .5 2q2.500-1 2-3.500T9 5z" fill="#d8d8d5" stroke="#7d7b76" strokeWidth=".8" />
          </Svg>
        </Tool>
        <Tool label="Read it" width="w-5">
          <Svg>
            <rect width="16" height="16" rx="2" fill="#f68f24" />
            <path d="M5 13V9h3l3 4M4 4h5.500Q11 4 11 6t-1.500 3H5" stroke="#fff" strokeWidth="1.800" />
          </Svg>
        </Tool>
      </div>
    </div>
  );
}

export default function App() {
  return (
    <div className="relative flex min-h-screen flex-col font-[DejaVu_Sans,sans-serif]">
      <TitleBar />
      <div className="bg-[#d3ab60] bg-[repeating-linear-gradient(177deg,#d4ae66_0px,#cea65b_14px,#d6b16a_26px,#d0a85f_37px,#d4ae66_48px)]">
        <AddonBar />
        <NavBar />
      </div>
      <TabStrip />
      <WikiPage />
      <StatusBar />
      <Svg className="pointer-events-none absolute top-[532px] left-[744px] h-[19px] w-3" box="0 0 12 19">
        <path d="M1 1v14l3-3 2.500 6L9 17l-2.500-5.500H11z" fill="#0c1530" stroke="#b9c0d0" />
      </Svg>
    </div>
  );
}
